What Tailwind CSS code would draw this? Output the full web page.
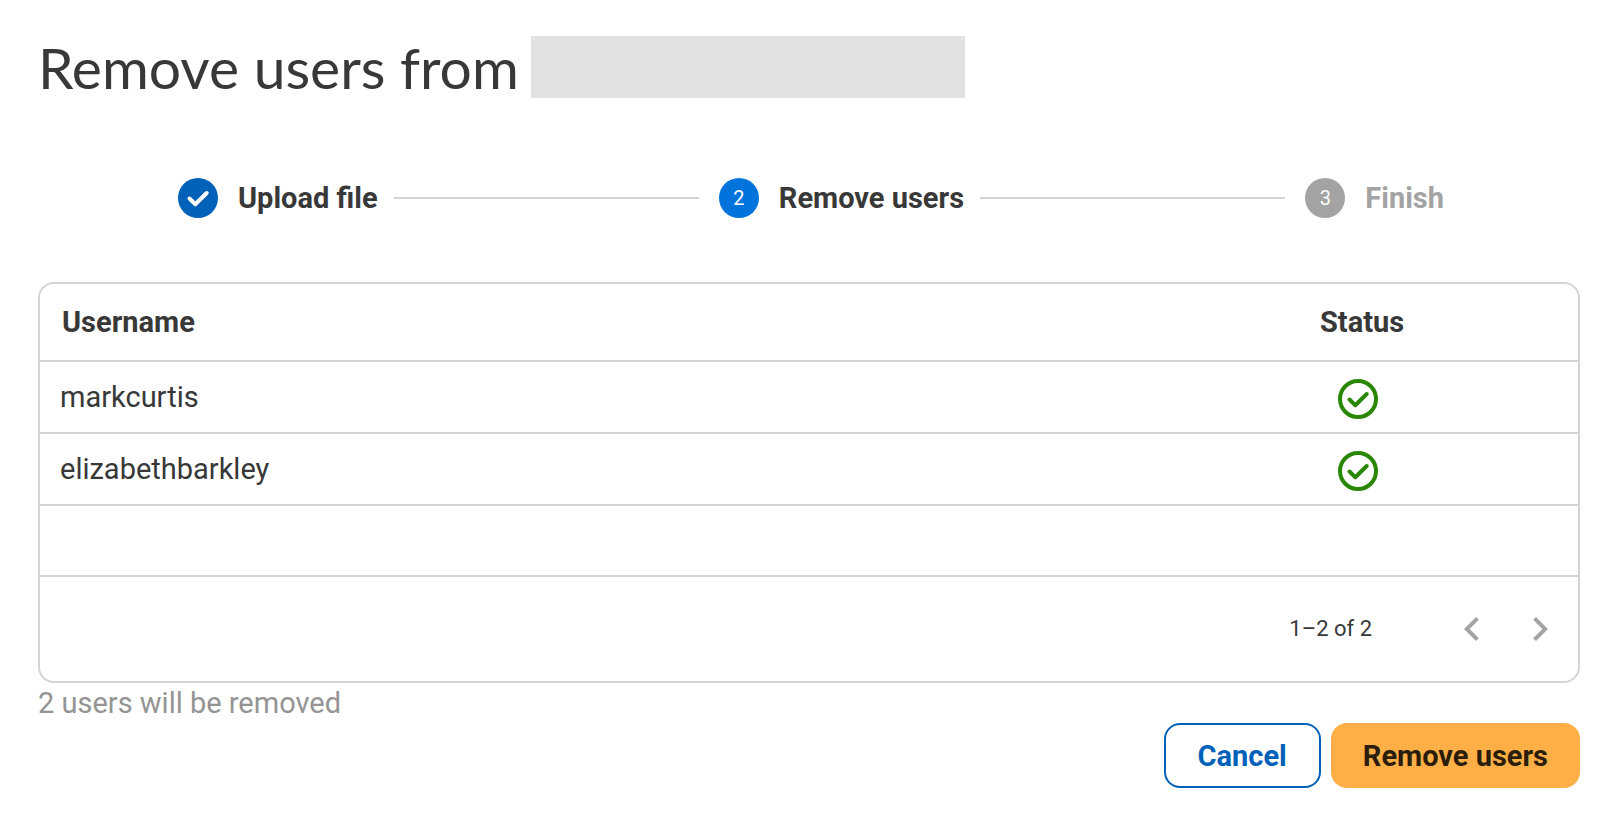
<!DOCTYPE html>
<html lang="en">
<head>
  <meta charset="UTF-8" />
  <meta name="viewport" content="width=device-width, initial-scale=1.0" />
  <title>Remove users</title>
  <script src="https://cdn.jsdelivr.net/npm/@tailwindcss/browser@4"></script>
</head>
<body class="bg-white text-[#383838] text-[29px] leading-9 font-[Roboto,sans-serif]">
  <main class="pl-[38px] pr-7 pt-9 pb-10">
    <h1 class="flex items-center gap-3 text-[57px] leading-[62px] font-[Lato,sans-serif]">
      Remove users from
      <span class="w-[434px] h-[62px] bg-[#e2e2e2]"></span>
    </h1>

    <!-- Stepper -->
    <ol class="flex items-center gap-4 mt-20 pl-[140px] pr-[136px] font-bold">
      <li class="flex items-center gap-5">
        <svg class="size-10" viewBox="0 0 40 40" fill="none" aria-hidden="true">
          <circle cx="20" cy="20" r="20" fill="#0061b8" />
          <path d="M11.5 20.5 L17.3 26.2 L28.7 15" stroke="#fff" stroke-width="4" stroke-linecap="round" stroke-linejoin="round" />
        </svg>
        Upload file
      </li>
      <li class="flex-1 h-[2px] mr-1 bg-[#d4d4d4]" aria-hidden="true"></li>
      <li class="flex items-center gap-5" aria-current="step">
        <span class="flex items-center justify-center size-10 rounded-full bg-[#0073dc] text-white text-xl font-normal">2</span>
        Remove users
      </li>
      <li class="flex-1 h-[2px] mr-1 bg-[#d4d4d4]" aria-hidden="true"></li>
      <li class="flex items-center gap-5 text-[#a3a3a3]">
        <span class="flex items-center justify-center size-10 rounded-full bg-[#a3a3a3] text-white text-xl font-normal">3</span>
        Finish
      </li>
    </ol>

    <!-- Users table -->
    <div class="mt-16 border-2 border-[#d4d4d4] rounded-2xl">
      <table class="w-full table-fixed border-separate border-spacing-0">
        <thead>
          <tr class="h-[78px]">
            <th class="pl-[22px] text-left border-b-2 border-[#d4d4d4]">Username</th>
            <th class="w-[280px] pl-[22px] text-left border-b-2 border-[#d4d4d4]">Status</th>
          </tr>
        </thead>
        <tbody>
          <tr class="h-[72px]">
            <td class="pl-5 border-b-2 border-[#d4d4d4]">markcurtis</td>
            <td class="pl-10 pt-1 border-b-2 border-[#d4d4d4]">
              <svg class="size-10" viewBox="0 0 40 40" fill="none" stroke="#2a8703" role="img" aria-label="Valid">
                <circle cx="20" cy="20" r="18" stroke-width="4" />
                <path d="M11.5 20.5 L17.3 26.2 L28.7 15" stroke-width="4" stroke-linecap="round" stroke-linejoin="round" />
              </svg>
            </td>
          </tr>
          <tr class="h-[72px]">
            <td class="pl-5 border-b-2 border-[#d4d4d4]">elizabethbarkley</td>
            <td class="pl-10 pt-1 border-b-2 border-[#d4d4d4]">
              <svg class="size-10" viewBox="0 0 40 40" fill="none" stroke="#2a8703" role="img" aria-label="Valid">
                <circle cx="20" cy="20" r="18" stroke-width="4" />
                <path d="M11.5 20.5 L17.3 26.2 L28.7 15" stroke-width="4" stroke-linecap="round" stroke-linejoin="round" />
              </svg>
            </td>
          </tr>
          <tr class="h-[71px]">
            <td colspan="2" class="border-b-2 border-[#d4d4d4]"></td>
          </tr>
        </tbody>
      </table>
      <div class="flex items-center justify-end gap-5 h-[104px] pr-[14px]">
        <span class="mr-14 text-[22px]">1–2 of 2</span>
        <button type="button" aria-label="Previous page" disabled>
          <svg class="size-12" viewBox="0 0 24 24" fill="#a3a3a3"><path d="M15.41 7.41 14 6l-6 6 6 6 1.41-1.41L10.83 12z" /></svg>
        </button>
        <button type="button" aria-label="Next page" disabled>
          <svg class="size-12" viewBox="0 0 24 24" fill="#a3a3a3"><path d="M10 6 8.59 7.41 13.17 12l-4.58 4.59L10 18l6-6z" /></svg>
        </button>
      </div>
    </div>

    <p class="my-0.5 text-[#949494]">2 users will be removed</p>

    <div class="flex justify-end gap-[10px] font-bold">
      <button type="button" class="px-8 h-[65px] border-2 border-[#0061b8] rounded-2xl text-[#0061b8]">Cancel</button>
      <button type="button" class="px-8 h-[65px] rounded-2xl bg-[#ffaf45] text-[#2b1d0b]">Remove users</button>
    </div>
  </main>
</body>
</html>
